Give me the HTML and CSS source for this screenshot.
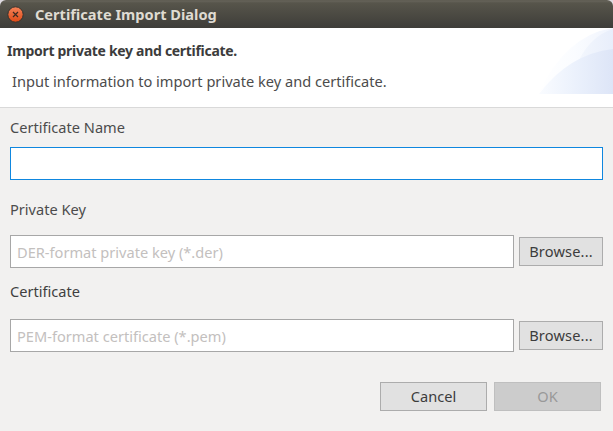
FILE: index.html
```html
<!DOCTYPE html>
<html lang="en">
<head>
<meta charset="utf-8">
<title>Certificate Import Dialog</title>
<link rel="stylesheet" href="styles.css">
</head>
<body>
<main class="dialog">
  <header class="titlebar">
    <svg class="close" width="18" height="18" viewBox="0 0 18 18" aria-hidden="true">
      <defs><linearGradient id="orange" x1="0" y1="0" x2="0" y2="1"><stop offset="0" stop-color="#f58359"/><stop offset="1" stop-color="#df4a16"/></linearGradient></defs>
      <circle cx="8.5" cy="9.5" r="7.7" fill="url(#orange)" stroke="#34332e" stroke-width="1"/>
      <path d="M6 7l5 5M11 7l-5 5" stroke="#3c2a21" stroke-width="1.2"/>
    </svg>
    <h1 class="title">Certificate Import Dialog</h1>
  </header>
  <section class="banner">
    <div class="banner-text">
      <h2 class="heading">Import private key and certificate.</h2>
      <p class="description">Input information to import private key and certificate.</p>
    </div>
    <svg class="art" width="75" height="66" viewBox="0 0 75 66" aria-hidden="true">
      <defs>
        <linearGradient id="back" gradientUnits="userSpaceOnUse" x1="0" y1="0" x2="75" y2="0"><stop offset="0" stop-color="#fff"/><stop offset=".5" stop-color="#fafcff"/><stop offset="1" stop-color="#f0f4fd"/></linearGradient>
        <linearGradient id="mid" gradientUnits="userSpaceOnUse" x1="40" y1="0" x2="75" y2="0"><stop offset="0" stop-color="#f3f7fd"/><stop offset="1" stop-color="#e8eefb"/></linearGradient>
        <linearGradient id="front" gradientUnits="userSpaceOnUse" x1="0" y1="0" x2="75" y2="0"><stop offset="0" stop-color="#fafcff"/><stop offset=".5" stop-color="#ebf1fc"/><stop offset="1" stop-color="#dde5f7"/></linearGradient>
      </defs>
      <path d="M0 66Q28 7 75 0V66Z" fill="url(#back)"/>
      <path d="M41 32Q53 8 75 1V66H41Z" fill="url(#mid)"/>
      <path d="M1 66Q31 26 75 21V66Z" fill="url(#front)"/>
    </svg>
  </section>
  <form class="content">
    <label class="label name-label" for="name">Certificate Name</label>
    <input class="field focused" id="name" type="text">
    <label class="label key-label" for="key">Private Key</label>
    <div class="row">
      <input class="field key-field" id="key" type="text" placeholder="DER-format private key (*.der)">
      <button class="button browse" type="button">Browse...</button>
    </div>
    <label class="label cert-label" for="cert">Certificate</label>
    <div class="row cert-row">
      <input class="field cert-field" id="cert" type="text" placeholder="PEM-format certificate (*.pem)">
      <button class="button browse" type="button">Browse...</button>
    </div>
    <div class="actions">
      <button class="button cancel" type="button">Cancel</button>
      <button class="button ok" type="button" disabled>OK</button>
    </div>
  </form>
</main>
</body>
</html>
```
FILE: styles.css
```css
* { box-sizing: border-box; }
body { margin: 0; background: #dfdbe2; }
.dialog {
  width: 613px;
  height: 431px;
  overflow: hidden;
  border-radius: 6px 6px 0 0;
  background: #f2f1f0;
  color: #4c4c4c;
  font: 14.6px/20px "Noto Sans", sans-serif;
}
.titlebar {
  display: flex;
  align-items: center;
  height: 28px;
  padding-left: 7px;
  background: linear-gradient(#5b594e 0, #66635a 1px, #57554b 3px, #3e3d39 28px);
}
.close { flex: none; }
.title {
  margin: 0 0 0 10px;
  color: #dfdbd2;
  font-size: 14.6px;
  font-weight: 700;
  line-height: 20px;
  white-space: nowrap;
}
.banner {
  display: flex;
  justify-content: space-between;
  height: 80px;
  background: #fff;
  border-bottom: 1px solid #d9d9d9;
}
.banner-text { padding: 13px 0 0 7px; }
.heading {
  margin: 0;
  color: #3c3c3c;
  font-size: 14px;
  font-weight: 700;
  line-height: 20px;
  letter-spacing: -0.3px;
}
.description { margin: 10px 0 0 5px; color: #4c4c4c; }
.art { flex: none; }
.content {
  display: flex;
  flex-direction: column;
  padding: 0 10px;
}
.label { align-self: flex-start; height: 20px; white-space: nowrap; }
.name-label { margin: 9px 0 10px; }
.key-label { margin: 19px 0 16px; }
.cert-label { margin: 13px 0 18px; color: #3f3f3f; }
.field {
  width: 100%;
  height: 33px;
  margin: 0;
  padding: 0 6px;
  border: 1px solid #a7a7a7;
  border-radius: 0;
  outline: none;
  background: #fff;
  color: #3c3c3c;
  font: inherit;
}
.field::placeholder { color: #c3c0be; opacity: 1; }
.focused { border-color: #0f87df; }
.row { display: flex; align-items: center; gap: 5px; }
.row .field { flex: 1; min-width: 0; }
.button {
  height: 29px;
  padding: 0 0 2px;
  border: 1px solid #acacac;
  border-radius: 0;
  background: #e1e1e1;
  color: #3c3c3c;
  font: inherit;
}
.browse { width: 84px; letter-spacing: 0.15px; }
.actions {
  display: flex;
  justify-content: flex-end;
  gap: 7px;
  margin: 30px 2px 0 0;
}
.cancel, .ok { width: 107px; }
.ok { border-color: #bfbfbf; background: #ccc; color: #999; }
```
